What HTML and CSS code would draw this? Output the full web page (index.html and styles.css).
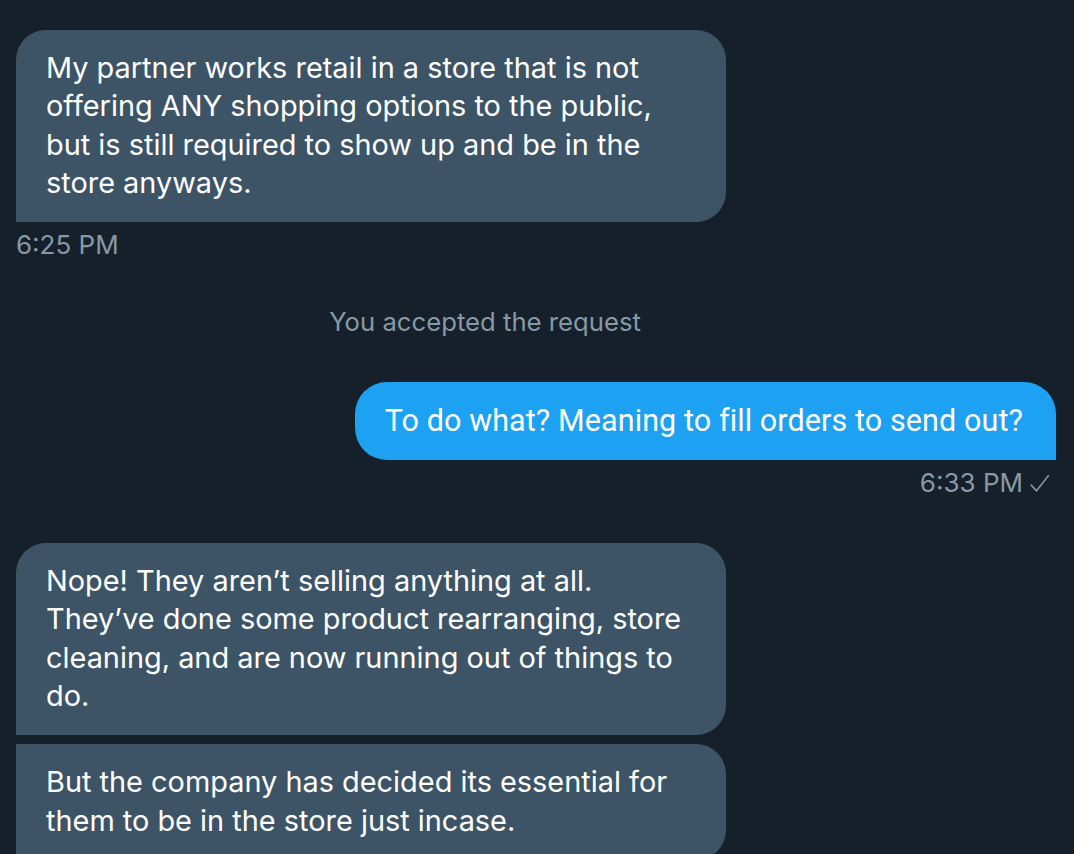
FILE: index.html
```html
<!DOCTYPE html>
<html lang="en">
<head>
<meta charset="utf-8">
<title>Messages</title>
<link rel="stylesheet" href="styles.css">
</head>
<body>
<main class="chat">
  <div class="bubble in single">My partner works retail in a store that is not offering ANY shopping options to the public, but is still required to show up and be in the store anyways.</div>
  <div class="time">6:25 PM</div>

  <div class="system">You accepted the request</div>

  <div class="bubble out">To do what? Meaning to fill orders to send out?</div>
  <div class="time sent">6:33 PM <svg class="check" viewBox="0 0 20 20" width="21" height="21" aria-hidden="true"><path d="M2 11.5 L7.2 17 L18.5 2.5" fill="none" stroke="currentColor" stroke-width="1.5" stroke-linecap="round" stroke-linejoin="round"/></svg></div>

  <div class="bubble in first">Nope! They aren’t selling anything at all. They’ve done some product rearranging, store cleaning, and are now running out of things to do.</div>
  <div class="bubble in last">But the company has decided its essential for them to be in the store just incase.</div>
</main>
</body>
</html>
```

FILE: styles.css
```css
html, body {
  margin: 0;
  padding: 0;
  background: #15202b;
  height: 100%;
  overflow: hidden;
}

body {
  font-family: Inter, "Noto Sans", sans-serif;
  color: #ffffff;
}

.chat {
  display: flex;
  flex-direction: column;
  padding: 30px 18px 0 16px;
}

.bubble {
  font-size: 28.9px;
  line-height: 38.3px;
  padding: 19px 30px 20px 30px;
  box-sizing: border-box;
}

.bubble.in {
  align-self: flex-start;
  width: 710px;
  background: #3d5466;
}

.bubble.single {
  border-radius: 30px 30px 30px 0;
}

.bubble.first {
  margin-top: 45px;
  border-radius: 30px 30px 30px 0;
}

.bubble.last {
  margin-top: 9px;
  border-radius: 0 30px 30px 0;
}

.bubble.out {
  align-self: flex-end;
  margin-top: 44px;
  background: #1da1f2;
  border-radius: 32px 32px 0 32px;
  padding: 20px 33px 20px 30px;
  font-family: Roboto, "Liberation Sans", sans-serif;
  font-size: 30.5px;
  letter-spacing: 0.1px;
  line-height: 38px;
}

.time {
  margin-top: 8px;
  font-size: 26px;
  line-height: 30px;
  color: #8899a6;
}

.time.sent {
  align-self: flex-end;
  margin-top: 8px;
  margin-right: 6px;
  display: flex;
  align-items: center;
  gap: 6px;
}

.check {
  display: block;
  color: #8899a6;
}

.system {
  margin-top: 46px;
  padding-right: 102px;
  text-align: center;
  font-size: 25.7px;
  line-height: 32px;
  color: #8899a6;
}
```
